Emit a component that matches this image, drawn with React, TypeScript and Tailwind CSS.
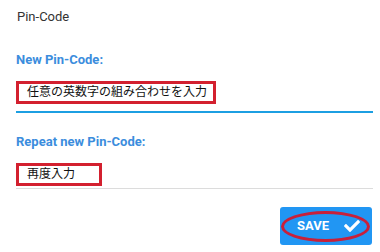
import { FaCheck } from "react-icons/fa";

const Field = ({
  label,
  value,
  active,
}: {
  label: string;
  value: string;
  active?: boolean;
}) => {
  return (
    <div>
      <div className="text-[13px] leading-[16px] font-bold text-[#3b8ddd]">
        {label}
      </div>
      <div
        className={`mt-[11px] ${
          active
            ? "border-b-2 border-[#1c9fe2] pb-[7px]"
            : "border-b border-[#dcdcdc] pb-[2px]"
        }`}
      >
        <span
          className={`inline-block whitespace-nowrap border-[3px] border-[#d3202f] pl-[8px] h-[23px] text-[12px] leading-[17px] text-[#111] ${
            active ? "w-[200px]" : "w-[86px]"
          }`}
        >
          {value}
        </span>
      </div>
    </div>
  );
};

export default function App() {
  return (
    <div
      className="w-[380px] h-[252px] bg-white pl-[16px] pr-[7px] pt-[9px] overflow-hidden"
      style={{ fontFamily: "Roboto, 'Noto Sans CJK JP', sans-serif" }}
    >
      <div className="text-[13px] leading-[16px] text-[#333] pl-[1px]">Pin-Code</div>

      <div className="mt-[27px]">
        <Field label="New Pin-Code:" value="任意の英数字の組み合わせを入力" active />
      </div>

      <div className="mt-[21px]">
        <Field label="Repeat new Pin-Code:" value="再度入力" />
      </div>

      <div className="flex justify-end mt-[18px] pr-[1px]">
        <button className="relative flex items-center gap-[15px] w-[92px] h-[38px] rounded-[3px] bg-[#2196f3] text-white pl-[17px]">
          <span className="text-[13px] font-bold">SAVE</span>
          <FaCheck className="w-[16px] h-[16px]" />
          <span className="absolute left-[1px] top-[4px] w-[89px] h-[31px] rounded-[50%] border-[3px] border-[#c8203a]" />
        </button>
      </div>
    </div>
  );
}
